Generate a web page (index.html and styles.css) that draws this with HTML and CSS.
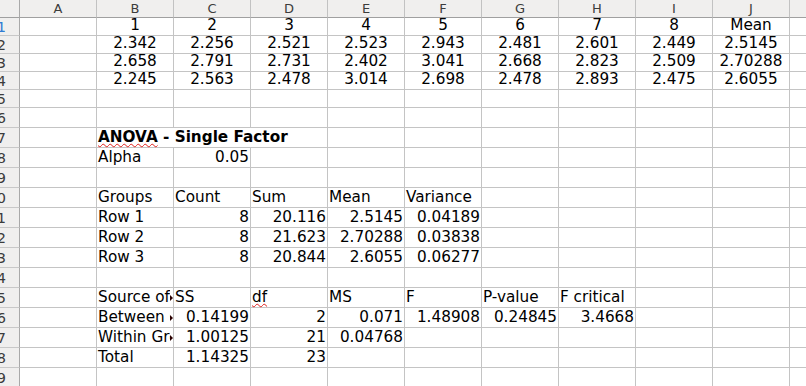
FILE: index.html
```html
<!DOCTYPE html>
<html>
<head>
<meta charset="utf-8">
<link rel="stylesheet" href="styles.css">
</head>
<body>
<div class="sheet">
  <div class="row hdr">
    <div class="corner"></div>
    <div class="ch">A</div><div class="ch">B</div><div class="ch">C</div><div class="ch">D</div><div class="ch">E</div>
    <div class="ch">F</div><div class="ch">G</div><div class="ch">H</div><div class="ch">I</div><div class="ch">J</div>
    <div class="ch fill"></div>
  </div>

  <div class="row">
    <div class="rh cur"><span>1</span></div>
    <div class="c"></div>
    <div class="c ctr">1</div><div class="c ctr">2</div><div class="c ctr">3</div><div class="c ctr">4</div>
    <div class="c ctr">5</div><div class="c ctr">6</div><div class="c ctr">7</div><div class="c ctr">8</div>
    <div class="c ctr">Mean</div>
    <div class="c fill"></div>
  </div>
  <div class="row">
    <div class="rh"><span>2</span></div>
    <div class="c"></div>
    <div class="c ctr">2.342</div><div class="c ctr">2.256</div><div class="c ctr">2.521</div><div class="c ctr">2.523</div>
    <div class="c ctr">2.943</div><div class="c ctr">2.481</div><div class="c ctr">2.601</div><div class="c ctr">2.449</div>
    <div class="c ctr">2.5145</div>
    <div class="c fill"></div>
  </div>
  <div class="row">
    <div class="rh"><span>3</span></div>
    <div class="c"></div>
    <div class="c ctr">2.658</div><div class="c ctr">2.791</div><div class="c ctr">2.731</div><div class="c ctr">2.402</div>
    <div class="c ctr">3.041</div><div class="c ctr">2.668</div><div class="c ctr">2.823</div><div class="c ctr">2.509</div>
    <div class="c ctr">2.70288</div>
    <div class="c fill"></div>
  </div>
  <div class="row">
    <div class="rh"><span>4</span></div>
    <div class="c"></div>
    <div class="c ctr">2.245</div><div class="c ctr">2.563</div><div class="c ctr">2.478</div><div class="c ctr">3.014</div>
    <div class="c ctr">2.698</div><div class="c ctr">2.478</div><div class="c ctr">2.893</div><div class="c ctr">2.475</div>
    <div class="c ctr">2.6055</div>
    <div class="c fill"></div>
  </div>
  <div class="row">
    <div class="rh"><span>5</span></div>
    <div class="c"></div><div class="c"></div><div class="c"></div><div class="c"></div><div class="c"></div>
    <div class="c"></div><div class="c"></div><div class="c"></div><div class="c"></div><div class="c"></div>
    <div class="c fill"></div>
  </div>
  <div class="row tall">
    <div class="rh"><span>6</span></div>
    <div class="c"></div><div class="c"></div><div class="c"></div><div class="c"></div><div class="c"></div>
    <div class="c"></div><div class="c"></div><div class="c"></div><div class="c"></div><div class="c"></div>
    <div class="c fill"></div>
  </div>
  <div class="row tall">
    <div class="rh"><span>7</span></div>
    <div class="c"></div>
    <div class="c span3 bold"><span class="sp">ANOVA</span>&nbsp;- Single Factor</div>
    <div class="c"></div><div class="c"></div><div class="c"></div><div class="c"></div><div class="c"></div><div class="c"></div>
    <div class="c fill"></div>
  </div>
  <div class="row tall">
    <div class="rh"><span>8</span></div>
    <div class="c"></div>
    <div class="c">Alpha</div><div class="c num">0.05</div>
    <div class="c"></div><div class="c"></div><div class="c"></div><div class="c"></div><div class="c"></div><div class="c"></div><div class="c"></div>
    <div class="c fill"></div>
  </div>
  <div class="row tall">
    <div class="rh"><span>9</span></div>
    <div class="c"></div><div class="c"></div><div class="c"></div><div class="c"></div><div class="c"></div>
    <div class="c"></div><div class="c"></div><div class="c"></div><div class="c"></div><div class="c"></div>
    <div class="c fill"></div>
  </div>
  <div class="row tall">
    <div class="rh"><span>10</span></div>
    <div class="c"></div>
    <div class="c">Groups</div><div class="c">Count</div><div class="c">Sum</div><div class="c">Mean</div><div class="c">Variance</div>
    <div class="c"></div><div class="c"></div><div class="c"></div><div class="c"></div>
    <div class="c fill"></div>
  </div>
  <div class="row tall">
    <div class="rh"><span>11</span></div>
    <div class="c"></div>
    <div class="c">Row 1</div><div class="c num">8</div><div class="c num">20.116</div><div class="c num">2.5145</div><div class="c num">0.04189</div>
    <div class="c"></div><div class="c"></div><div class="c"></div><div class="c"></div>
    <div class="c fill"></div>
  </div>
  <div class="row tall">
    <div class="rh"><span>12</span></div>
    <div class="c"></div>
    <div class="c">Row 2</div><div class="c num">8</div><div class="c num">21.623</div><div class="c num">2.70288</div><div class="c num">0.03838</div>
    <div class="c"></div><div class="c"></div><div class="c"></div><div class="c"></div>
    <div class="c fill"></div>
  </div>
  <div class="row tall">
    <div class="rh"><span>13</span></div>
    <div class="c"></div>
    <div class="c">Row 3</div><div class="c num">8</div><div class="c num">20.844</div><div class="c num">2.6055</div><div class="c num">0.06277</div>
    <div class="c"></div><div class="c"></div><div class="c"></div><div class="c"></div>
    <div class="c fill"></div>
  </div>
  <div class="row tall">
    <div class="rh"><span>14</span></div>
    <div class="c"></div><div class="c"></div><div class="c"></div><div class="c"></div><div class="c"></div>
    <div class="c"></div><div class="c"></div><div class="c"></div><div class="c"></div><div class="c"></div>
    <div class="c fill"></div>
  </div>
  <div class="row tall">
    <div class="rh"><span>15</span></div>
    <div class="c"></div>
    <div class="c clip"><span class="cliptext">Source of Variation</span></div><div class="c">SS</div><div class="c"><span class="sp">df</span></div>
    <div class="c">MS</div><div class="c">F</div><div class="c">P-value</div><div class="c">F critical</div>
    <div class="c"></div><div class="c"></div>
    <div class="c fill"></div>
  </div>
  <div class="row tall">
    <div class="rh"><span>16</span></div>
    <div class="c"></div>
    <div class="c clip"><span class="cliptext">Between Groups</span></div><div class="c num">0.14199</div><div class="c num">2</div>
    <div class="c num">0.071</div><div class="c num">1.48908</div><div class="c num">0.24845</div><div class="c num">3.4668</div>
    <div class="c"></div><div class="c"></div>
    <div class="c fill"></div>
  </div>
  <div class="row tall">
    <div class="rh"><span>17</span></div>
    <div class="c"></div>
    <div class="c clip"><span class="cliptext">Within Groups</span></div><div class="c num">1.00125</div><div class="c num">21</div>
    <div class="c num">0.04768</div>
    <div class="c"></div><div class="c"></div><div class="c"></div><div class="c"></div><div class="c"></div>
    <div class="c fill"></div>
  </div>
  <div class="row tall">
    <div class="rh"><span>18</span></div>
    <div class="c"></div>
    <div class="c">Total</div><div class="c num">1.14325</div><div class="c num">23</div>
    <div class="c"></div><div class="c"></div><div class="c"></div><div class="c"></div><div class="c"></div><div class="c"></div>
    <div class="c fill"></div>
  </div>
  <div class="row tall">
    <div class="rh"><span>19</span></div>
    <div class="c"></div><div class="c"></div><div class="c"></div><div class="c"></div><div class="c"></div>
    <div class="c"></div><div class="c"></div><div class="c"></div><div class="c"></div><div class="c"></div>
    <div class="c fill"></div>
  </div>
</div>
</body>
</html>
```
FILE: styles.css
```css
html, body {
  margin: 0;
  padding: 0;
  background: #ffffff;
  overflow: hidden;
}

.sheet {
  width: 806px;
  height: 386px;
  overflow: hidden;
  font-family: "DejaVu Sans", sans-serif;
  font-size: 15.25px;
  color: #000000;
}

.row {
  display: flex;
  height: 18px;
}

.row.tall {
  height: 20px;
}

.corner,
.ch {
  box-sizing: border-box;
  height: 18px;
  background: #f0efee;
  border-right: 1px solid #a9a9a9;
  border-bottom: 1px solid #a0a0a0;
  flex: none;
}

.corner {
  width: 20px;
}

.ch {
  width: 77px;
  display: flex;
  align-items: center;
  justify-content: center;
  font-size: 13px;
  color: #3c3c3c;
  border-right-color: #c2c2c2;
}

.ch.fill {
  flex: 1;
  border-right: none;
}

.rh {
  box-sizing: border-box;
  width: 20px;
  flex: none;
  background: #f0efee;
  border-right: 1px solid #a9a9a9;
  border-bottom: 1px solid #c8c8c8;
  overflow: hidden;
  display: flex;
  align-items: center;
  justify-content: flex-end;
  padding-right: 13px;
  font-size: 14.5px;
  color: #3c3c3c;
  white-space: nowrap;
}

.rh.cur {
  color: #2f7bd3;
}

.c {
  box-sizing: border-box;
  width: 77px;
  flex: none;
  border-right: 1px solid #c4c4c4;
  border-bottom: 1px solid #c4c4c4;
  display: flex;
  align-items: flex-end;
  justify-content: flex-start;
  padding: 0 1px 1px 1px;
  line-height: 17px;
  white-space: nowrap;
  position: relative;
}

.c.fill {
  flex: 1;
  border-right: none;
}

.c.ctr {
  justify-content: center;
}

.c.num {
  justify-content: flex-end;
}

.c.span3 {
  width: 231px;
}

.bold {
  font-weight: bold;
}

.sp {
  text-decoration: underline wavy #e0201c;
  text-decoration-thickness: 1.2px;
  text-underline-offset: 1px;
  text-decoration-skip-ink: none;
}

.cliptext {
  display: block;
  width: 72px;
  overflow: hidden;
}

.clip::after {
  content: "";
  position: absolute;
  right: 0;
  top: 7px;
  width: 0;
  height: 0;
  border-left: 3px solid #2a0000;
  border-top: 3.5px solid transparent;
  border-bottom: 3.5px solid transparent;
}
```
